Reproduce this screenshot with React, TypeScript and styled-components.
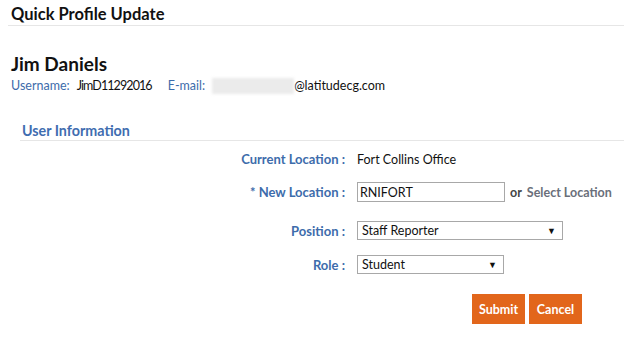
import styled, { createGlobalStyle } from "styled-components";

const GlobalStyle = createGlobalStyle`
  html, body {
    margin: 0;
    padding: 0;
    background: #ffffff;
  }
  body {
    font-family: "Lato", "Liberation Sans", sans-serif;
    color: #111;
  }
`;

const Page = styled.div`
  width: 624px;
  height: 339px;
  overflow: hidden;
`;

const Header = styled.h1`
  margin: 0 0 0 8px;
  padding: 5px 0 2px 3px;
  font-size: 16.5px;
  line-height: 18px;
  font-weight: 700;
  color: #111;
  border-bottom: 1px solid #e6e6e6;
`;

const Profile = styled.div`
  padding: 27px 0 0 11px;
`;

const Name = styled.h2`
  margin: 0;
  font-size: 19px;
  font-weight: 700;
  color: #111;
  line-height: 22px;
`;

const MetaRow = styled.div`
  display: flex;
  align-items: center;
  margin-top: 3px;
  font-size: 12.5px;
  line-height: 16px;
`;

const MetaLabel = styled.span`
  color: #3d6cab;
  margin-right: 7px;
`;

const MetaValue = styled.span`
  color: #111;
  font-size: 12.5px;
  letter-spacing: -0.9px;
  margin-right: 16px;
`;

const Blur = styled.span`
  display: inline-block;
  width: 82px;
  height: 16px;
  background: #ebebeb;
  filter: blur(1.5px);
`;

const Section = styled.div`
  margin: 28px 0 0 20px;
`;

const SectionTitle = styled.h3`
  margin: 0;
  padding: 0 0 1px 2px;
  font-size: 14.3px;
  line-height: 17px;
  font-weight: 700;
  color: #3f6db0;
  border-bottom: 1px solid #e6e6e6;
`;

const Form = styled.div`
  display: grid;
  grid-template-columns: 325px auto;
  column-gap: 12px;
  align-items: center;
  margin-top: 4px;
  font-size: 12.5px;
`;

const Label = styled.div<{ $h: number }>`
  height: ${(p) => p.$h}px;
  display: flex;
  align-items: center;
  justify-content: flex-end;
  color: #3d6cab;
  font-size: 13px;
  font-weight: 700;
`;

const Field = styled.div<{ $h: number }>`
  height: ${(p) => p.$h}px;
  display: flex;
  align-items: center;
  gap: 5px;
  color: #111;
`;

const TextInput = styled.input`
  box-sizing: border-box;
  width: 148px;
  height: 20px;
  border: 1px solid #a8a8a8;
  padding: 0 2px;
  font-family: inherit;
  font-size: 12.5px;
  color: #111;
`;

const Or = styled.span`
  color: #444;
  font-size: 12.5px;
  font-weight: 700;
`;

const SelectLink = styled.span`
  color: #6a6f7a;
  font-size: 12.5px;
  font-weight: 700;
`;

const SelectBox = styled.div<{ $w: number }>`
  box-sizing: border-box;
  width: ${(p) => p.$w}px;
  height: 19px;
  border: 1px solid #a8a8a8;
  display: flex;
  align-items: center;
  justify-content: space-between;
  padding: 0 6px 0 4px;
  font-size: 12.5px;
  color: #111;
`;

const Caret = styled.span`
  font-size: 9px;
  color: #111;
`;

const Actions = styled.div`
  display: flex;
  gap: 4px;
  padding-left: 472px;
  margin-top: 15px;
`;

const Button = styled.button`
  box-sizing: border-box;
  width: 53px;
  height: 30px;
  padding: 0;
  border: none;
  background: #e2661b;
  color: #fff;
  font-family: "Lato", "Liberation Sans", sans-serif;
  font-size: 12.5px;
  font-weight: 700;
  cursor: pointer;
`;

export default function App() {
  return (
    <Page>
      <GlobalStyle />
      <Header>Quick Profile Update</Header>
      <Profile>
        <Name>Jim Daniels</Name>
        <MetaRow>
          <MetaLabel>Username:</MetaLabel>
          <MetaValue>JimD11292016</MetaValue>
          <MetaLabel>E-mail:</MetaLabel>
          <Blur />
          <span>@latitudecg.com</span>
        </MetaRow>
      </Profile>
      <Section>
        <SectionTitle>User Information</SectionTitle>
        <Form>
          <Label $h={28}>Current Location :</Label>
          <Field $h={28}>Fort Collins Office</Field>
          <Label $h={38}>* New Location :</Label>
          <Field $h={38}>
            <TextInput defaultValue="RNIFORT" />
            <Or>or</Or>
            <SelectLink>Select Location</SelectLink>
          </Field>
          <Label $h={39}>Position :</Label>
          <Field $h={39}>
            <SelectBox $w={206}>
              Staff Reporter <Caret>▼</Caret>
            </SelectBox>
          </Field>
          <Label $h={29}>Role :</Label>
          <Field $h={29}>
            <SelectBox $w={147}>
              Student <Caret>▼</Caret>
            </SelectBox>
          </Field>
        </Form>
      </Section>
      <Actions>
        <Button>Submit</Button>
        <Button>Cancel</Button>
      </Actions>
    </Page>
  );
}
